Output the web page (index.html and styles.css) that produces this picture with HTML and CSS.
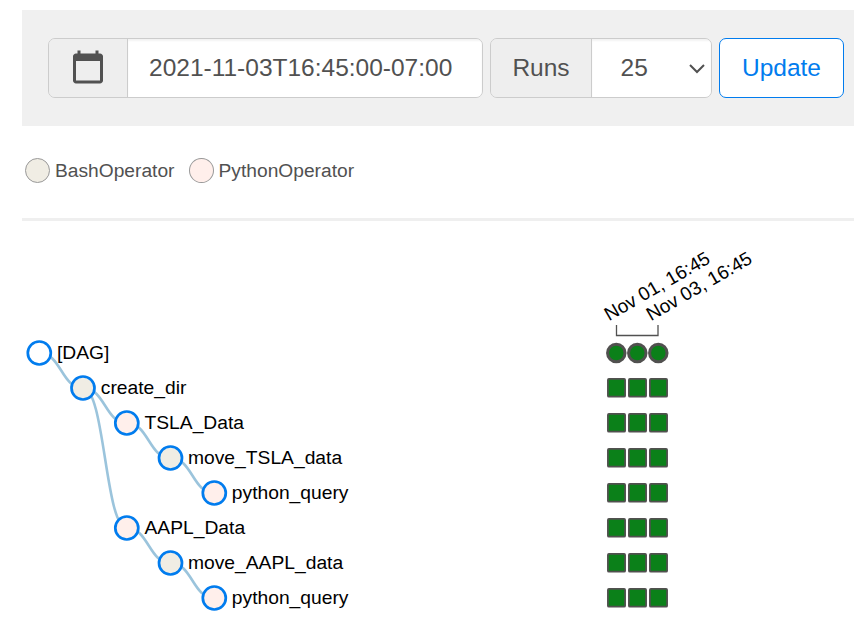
FILE: index.html
```
<!DOCTYPE html>
<html lang="en">
<head>
<meta charset="utf-8">
<title>Tree View</title>
<link rel="stylesheet" href="styles.css">
</head>
<body>
<main>
  <form class="toolbar">
    <div class="group date">
      <span class="addon icon"><svg width="36" height="36" viewBox="0 0 24 24"><path fill="#515151" d="M20 3h-1V1h-2v2H7V1H5v2H4c-1.100 0-2 .9-2 2v16c0 1.100.9 2 2 2h16c1.100 0 2-.9 2-2V5c0-1.100-.9-2-2-2zm0 18H4V8h16v13z"/></svg></span>
      <span class="field">2021-11-03T16:45:00-07:00</span>
    </div>
    <div class="group runs">
      <span class="addon label">Runs</span>
      <span class="field select">25<svg width="18" height="12" viewBox="0 0 18 12"><path d="M2 3L9 10L16 3" fill="none" stroke="#515151" stroke-width="2"/></svg></span>
    </div>
    <button type="button" class="update">Update</button>
  </form>
  <div class="legend">
    <span class="item"><i class="dot bash"></i>BashOperator</span>
    <span class="item"><i class="dot python"></i>PythonOperator</span>
  </div>
  <hr>
  <svg class="tree" width="832" height="407" viewBox="22 221 832 407">
    <g class="links">
      <path d="M39.300 353C61.200 353 61.200 388 83 388"/>
      <path d="M83 388C105 388 105 423 126.800 423"/>
      <path d="M126.800 423C148.700 423 148.700 458 170.500 458"/>
      <path d="M170.500 458C192.400 458 192.400 493 214.300 493"/>
      <path d="M83 388C105 388 105 528 126.800 528"/>
      <path d="M126.800 528C148.700 528 148.700 563 170.500 563"/>
      <path d="M170.500 563C192.400 563 192.400 598 214.300 598"/>
    </g>
    <g class="nodes">
      <circle class="root" cx="39.300" cy="353" r="11.500"/>
      <circle class="bash" cx="83" cy="388" r="11.500"/>
      <circle class="python" cx="126.800" cy="423" r="11.500"/>
      <circle class="bash" cx="170.500" cy="458" r="11.500"/>
      <circle class="python" cx="214.300" cy="493" r="11.500"/>
      <circle class="python" cx="126.800" cy="528" r="11.500"/>
      <circle class="bash" cx="170.500" cy="563" r="11.500"/>
      <circle class="python" cx="214.300" cy="598" r="11.500"/>
    </g>
    <g class="names">
      <text x="57" y="359">[DAG]</text>
      <text x="100.800" y="394">create_dir</text>
      <text x="144.500" y="429">TSLA_Data</text>
      <text x="188" y="464">move_TSLA_data</text>
      <text x="231.800" y="499">python_query</text>
      <text x="144.500" y="534">AAPL_Data</text>
      <text x="188" y="569">move_AAPL_data</text>
      <text x="231.800" y="604">python_query</text>
      <text class="date-label" transform="translate(609 321.300) rotate(-30)">Nov 01, 16:45</text>
      <text class="date-label" transform="translate(651 321.300) rotate(-30)">Nov 03, 16:45</text>
    </g>
    <path class="axis" d="M616.500 325V335.500H658V325"/>
    <defs>
      <g id="tasks">
        <rect x="607.900" y="-9.100" width="17.200" height="17.800" rx="1"/>
        <rect x="628.900" y="-9.100" width="17.200" height="17.800" rx="1"/>
        <rect x="649.900" y="-9.100" width="17.200" height="17.800" rx="1"/>
      </g>
    </defs>
    <g class="runs-row">
      <circle cx="616.300" cy="353" r="8.750"/>
      <circle cx="637.300" cy="353" r="8.750"/>
      <circle cx="658.300" cy="353" r="8.750"/>
    </g>
    <g class="task-rows">
      <use href="#tasks" y="388"/>
      <use href="#tasks" y="423"/>
      <use href="#tasks" y="458"/>
      <use href="#tasks" y="493"/>
      <use href="#tasks" y="528"/>
      <use href="#tasks" y="563"/>
      <use href="#tasks" y="598"/>
    </g>
  </svg>
</main>
</body>
</html>
```
FILE: styles.css
```
* { box-sizing: border-box; }
body {
  margin: 0;
  overflow: hidden;
  background: #fff;
  color: #515151;
  font-family: "Liberation Sans", Arial, sans-serif;
}
main { padding: 10px 0 0 22px; }
.toolbar {
  display: flex;
  gap: 7px;
  height: 116px;
  padding: 28px 10px 28px 26px;
  background: #f0f0f0;
  font-size: 24.5px;
}
.group {
  display: flex;
  height: 60px;
  border: 1px solid #ccc;
  border-radius: 7px;
  overflow: hidden;
}
.date { width: 435px; }
.runs { width: 222px; }
.addon {
  display: flex;
  align-items: center;
  justify-content: center;
  flex: none;
  background: #eee;
  border-right: 1px solid #ccc;
}
.icon { width: 79px; }
.icon svg { display: block; margin-top: -3px; }
.label { width: 101px; }
.field {
  display: flex;
  align-items: center;
  flex: 1;
  padding-left: 21px;
  background: #fff;
  box-shadow: inset 0 2px 2px rgba(0, 0, 0, .05);
  white-space: nowrap;
}
.select { justify-content: space-between; padding: 0 5px 0 28.5px; }
.update {
  width: 125px;
  height: 60px;
  padding: 0;
  border: 1px solid #017cee;
  border-radius: 7px;
  background: #fff;
  color: #017cee;
  font: inherit;
}
.legend {
  display: flex;
  gap: 14.6px;
  height: 92px;
  padding: 0 0 3px 3px;
  align-items: center;
  font-size: 19.2px;
}
.item { display: flex; align-items: center; gap: 5px; }
.dot {
  width: 25px;
  height: 25px;
  border: 1px solid #999;
  border-radius: 50%;
}
.dot.python { width: 24.5px; }
.dot.bash { background: #f0ede4; }
.dot.python { background: #ffefeb; }
hr { height: 3px; margin: 0; border: 0; background: #efefef; }
.tree { display: block; }
.links path { fill: none; stroke: #9bc4dc; stroke-width: 2.6; }
.nodes circle { stroke: #017cee; stroke-width: 2.7; }
.root { fill: #fff; }
.nodes .bash { fill: #f0ede4; }
.nodes .python { fill: #ffefeb; }
.names { fill: #000; font-size: 19.25px; }
.date-label { font-size: 19px; }
.axis { fill: none; stroke: #515151; stroke-width: 1.3; }
.runs-row { fill: #0b8019; stroke: #51504f; stroke-width: 3; }
.task-rows { fill: #0b8019; stroke: #51504f; stroke-width: 1.75; }
```
